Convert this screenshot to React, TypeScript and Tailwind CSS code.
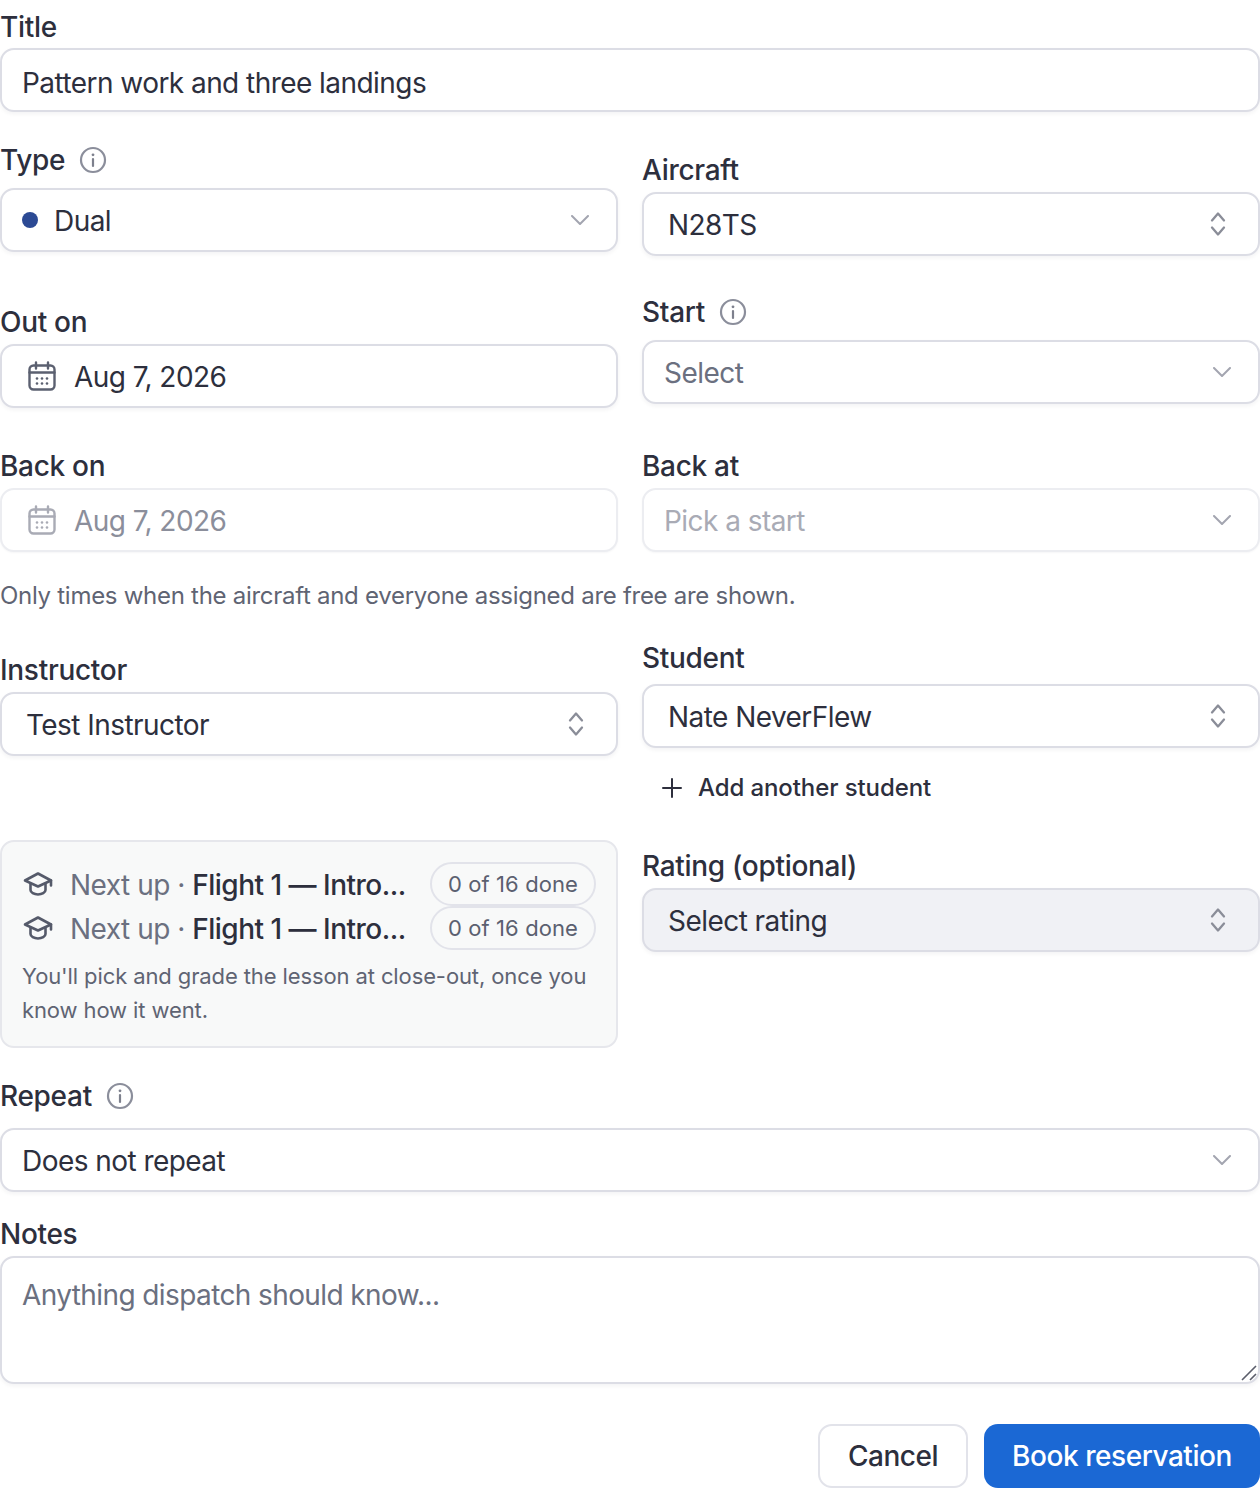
import React from "react";

function InfoIcon() {
  return (
    <svg width="28" height="28" viewBox="0 0 28 28" fill="none" className="shrink-0">
      <circle cx="14" cy="14" r="12" stroke="#8b8e9b" strokeWidth="2.2" />
      <path d="M14 13v7" stroke="#7d808d" strokeWidth="2.2" strokeLinecap="round" />
      <circle cx="14" cy="8.8" r="1.4" fill="#7d808d" />
    </svg>
  );
}

function ChevronDown() {
  return (
    <svg width="18" height="10" viewBox="0 0 18 10" fill="none" className="shrink-0">
      <path d="M1 1l8 8 8-8" stroke="#a3a5b0" strokeWidth="2" strokeLinecap="round" strokeLinejoin="round" />
    </svg>
  );
}

function ChevronsUpDown() {
  return (
    <svg width="16" height="26" viewBox="0 0 16 26" fill="none" className="shrink-0">
      <path d="M2 9.5L8 2.5l6 7M2 16.5l6 7 6-7" stroke="#8a8d98" strokeWidth="2.3" strokeLinecap="round" strokeLinejoin="round" />
    </svg>
  );
}

function CalendarIcon({ color }: { color: string }) {
  return (
    <svg width="28" height="30" viewBox="0 0 28 30" fill="none" className="shrink-0">
      <rect x="1.5" y="4.5" width="25" height="24" rx="4" stroke={color} strokeWidth="2.4" />
      <path d="M8 1.5v6M20 1.5v6M1.5 11.5h25" stroke={color} strokeWidth="2.4" strokeLinecap="round" />
      <g fill={color}>
        <circle cx="9" cy="17.5" r="1.3" /><circle cx="14" cy="17.5" r="1.3" /><circle cx="19" cy="17.5" r="1.3" />
        <circle cx="9" cy="22.5" r="1.3" /><circle cx="14" cy="22.5" r="1.3" /><circle cx="19" cy="22.5" r="1.3" />
      </g>
    </svg>
  );
}

function CapIcon() {
  return (
    <svg width="32" height="26" viewBox="0 0 32 26" fill="none" className="shrink-0">
      <path d="M16 2.500L29 9.500 16 15.500 3 9.500Z" stroke="#555a6a" strokeWidth="2.600" strokeLinejoin="round" />
      <path d="M8.500 13v6c0 2.500 3.500 4.500 7.500 4.500s7.500-2 7.500-4.500v-6M29 9.500v5" stroke="#555a6a" strokeWidth="2.600" strokeLinecap="round" />
    </svg>
  );
}

function Label({ children, info, className = "" }: { children: React.ReactNode; info?: boolean; className?: string }) {
  return (
    <div className={`flex items-center gap-[14px] h-[40px] text-[28px] leading-[40px] font-medium tracking-[-0.3px] text-[#2d2f3d] ${info ? "mb-[8px]" : "mb-[2px]"} ${className}`}>
      <span>{children}</span>
      {info && <InfoIcon />}
    </div>
  );
}

const box = "flex items-center h-[64px] rounded-[14px] border-2 border-[#dcdde5] bg-white shadow-[0_2px_4px_rgba(16,24,40,0.05)] text-[28px] tracking-[-0.55px] text-[#2d2f3d]";

function Select({ children, kind = "down", pl = "pl-[20px]", className = "" }: { children: React.ReactNode; kind?: "down" | "updown"; pl?: string; className?: string }) {
  return (
    <div className={`${box} ${pl} ${kind === "down" ? "pr-[27px]" : "pr-[32px]"} justify-between ${className}`}>
      <div className="flex items-center min-w-0 pt-[1px]">{children}</div>
      {kind === "down" ? <ChevronDown /> : <ChevronsUpDown />}
    </div>
  );
}

function Lesson() {
  return (
    <div className="flex items-center justify-between h-[44px]">
      <div className="flex items-center min-w-0">
        <CapIcon />
        <span className="ml-[16px] pt-[1px] text-[#6b7080] tracking-[-0.5px] whitespace-nowrap">Next up · <span className="font-medium text-[#2d2f3d]">Flight 1 — Intro...</span></span>
      </div>
      <span className="h-[44px] w-[166px] shrink-0 justify-center flex items-center rounded-full border-2 border-[#e2e3ea] text-[22px] text-[#5b6070] tracking-[0.1px] whitespace-nowrap">0 of 16 done</span>
    </div>
  );
}

export default function App() {
  return (
    <div className="w-[1260px] bg-white font-['Inter',sans-serif] text-[#2d2f3d] pt-[7px]">
      <Label className="!mb-[1px]">Title</Label>
      <input readOnly value="Pattern work and three landings" className={`${box} w-full pl-[20px] pr-[20px] pt-[6px] outline-none`} />

      <div className="grid grid-cols-2 gap-x-[24px] mt-[28px]">
        <div>
          <Label info>Type</Label>
          <Select>
            <span className="w-[16px] h-[16px] rounded-full bg-[#2c4a94] mr-[16px] -mt-[1px]" />
            <span>Dual</span>
          </Select>
        </div>
        <div className="mt-[10px]">
          <Label>Aircraft</Label>
          <Select kind="updown" pl="pl-[24px]">N28TS</Select>
        </div>
      </div>

      <div className="grid grid-cols-2 gap-x-[24px] mt-[36px]">
        <div className="mt-[10px]">
          <Label>Out on</Label>
          <div className={`${box} pl-[26px]`}>
            <CalendarIcon color="#5b6070" />
            <span className="ml-[18px] pt-[1px]">Aug 7, 2026</span>
          </div>
        </div>
        <div>
          <Label info>Start</Label>
          <Select><span className="text-[#6b7080]">Select</span></Select>
        </div>
      </div>

      <div className="grid grid-cols-2 gap-x-[24px] mt-[38px]">
        <div>
          <Label>Back on</Label>
          <div className={`${box} pl-[26px] !border-[#ecedf1] !text-[#8b8e9b] !shadow-[0_1px_2px_rgba(16,24,40,0.04)]`}>
            <CalendarIcon color="#a9abb5" />
            <span className="ml-[18px] pt-[1px]">Aug 7, 2026</span>
          </div>
        </div>
        <div>
          <Label>Back at</Label>
          <Select className="!border-[#ecedf1] !shadow-[0_1px_2px_rgba(16,24,40,0.04)]"><span className="text-[#a9abb5]">Pick a start</span></Select>
        </div>
      </div>

      <p className="mt-[26px] text-[24px] leading-[36px] text-[#5f6473] tracking-[-0.28px]">Only times when the aircraft and everyone assigned are free are shown.</p>

      <div className="grid grid-cols-2 gap-x-[24px] mt-[24px]">
        <div className="flex flex-col">
          <div className="mt-[12px]">
            <Label>Instructor</Label>
            <Select kind="updown" pl="pl-[24px]">Test Instructor</Select>
          </div>
          <div className="mt-[84px] h-[208px] rounded-[14px] border-2 border-[#e6e7ec] bg-[#f8f9f9] pl-[20px] pr-[20px] pt-[20px] text-[28px]">
            <Lesson />
            <Lesson />
            <p className="mt-[9px] text-[22px] leading-[34px] text-[#5f6473] tracking-[-0.11px]">You'll pick and grade the lesson at close-out, once you know how it went.</p>
          </div>
        </div>
        <div>
          <Label className="!mb-[6px]">Student</Label>
          <Select kind="updown" pl="pl-[24px]">Nate NeverFlew</Select>
          <div className="flex items-center h-[40px] mt-[20px] pl-[20px] text-[24px] font-medium tracking-[-0.1px] text-[#2d2f3d]">
            <svg width="20" height="20" viewBox="0 0 20 20" fill="none" className="shrink-0">
              <path d="M10 1v18M1 10h18" stroke="#2d2f3d" strokeWidth="2" strokeLinecap="round" />
            </svg>
            <span className="ml-[16px]">Add another student</span>
          </div>
          <div className="mt-[38px]">
            <Label>Rating (optional)</Label>
            <Select kind="updown" pl="pl-[24px]" className="!bg-[#f0f1f5]">Select rating</Select>
          </div>
        </div>
      </div>

      <div className="mt-[28px]">
        <Label info className="!mb-[12px]">Repeat</Label>
        <Select>Does not repeat</Select>
      </div>

      <div className="mt-[22px]">
        <Label>Notes</Label>
        <div className="relative">
          <textarea placeholder="Anything dispatch should know..." className="block w-full h-[128px] resize-none rounded-[14px] border-2 border-[#dcdde5] bg-white shadow-[0_2px_4px_rgba(16,24,40,0.05)] px-[20px] py-[17px] text-[28px] leading-[40px] tracking-[-0.6px] outline-none placeholder:text-[#6b7080]" />
          <svg width="18" height="18" viewBox="0 0 18 18" fill="none" className="absolute right-[2px] bottom-[3px]">
            <path d="M2 17L16 3M10 17l6-6" stroke="#5b5e6b" strokeWidth="1.6" />
          </svg>
        </div>
      </div>

      <div className="flex justify-end gap-[16px] mt-[40px]">
        <button className="h-[64px] w-[150px] rounded-[14px] border-2 border-[#e2e3ea] bg-white text-[28px] font-medium tracking-[-0.5px] text-[#2d2f3d]">Cancel</button>
        <button className="h-[64px] w-[276px] rounded-[14px] bg-[#1b68d4] text-[28px] font-medium tracking-[-0.45px] text-white">Book reservation</button>
      </div>
    </div>
  );
}
